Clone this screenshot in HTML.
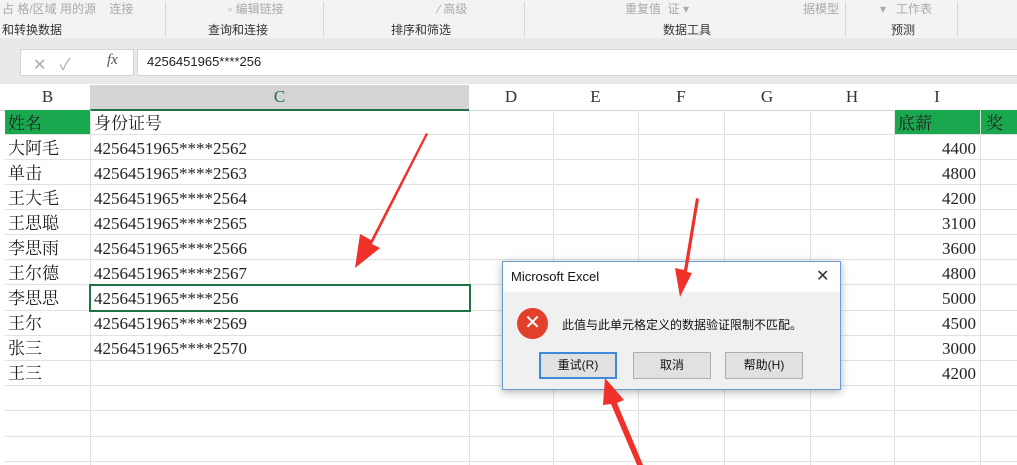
<!DOCTYPE html>
<html><head><meta charset="utf-8"><style>
body{margin:0;width:1017px;height:465px;overflow:hidden;background:#fff;position:relative;font-family:"Liberation Sans","Noto Sans CJK SC",sans-serif}
.a{position:absolute}
.rb{left:0;top:0;width:1017px;height:40px;background:#f3f3f3}
.gl{font-size:12px;color:#333;top:21px}
.gt{font-size:12px;color:#aaa;top:0px}
.sep{width:1px;background:#d6d6d6;top:2px;height:34px}
.cell{font-family:"Liberation Serif","Noto Serif CJK SC",serif;font-size:17px;color:#222}
.hl{background:#e1e1e1;height:1px;left:5px;width:1012px}
.vl{background:#e1e1e1;width:1px;top:110px;height:355px}
.ch{font-family:"Liberation Serif","Noto Serif CJK SC",serif;font-size:17px;color:#333;top:87px;text-align:center}
.btn{top:352px;width:76px;height:25px;background:#e1e1e1;border:1px solid #adadad;font-size:12px;text-align:center;line-height:25px;color:#111}
</style></head><body>
<div class="a rb"></div>
<div class="a gt" style="left:2px">占 格/区域 用的源&nbsp;&nbsp;&nbsp;&nbsp;连接</div>
<div class="a gt" style="left:228px">▫ 编辑链接</div>
<div class="a gt" style="left:438px">∕ 高级</div>
<div class="a gt" style="left:625px">重复值&nbsp;&nbsp;证 ▾</div>
<div class="a gt" style="left:803px">据模型</div>
<div class="a gt" style="left:880px">▾&nbsp;&nbsp;&nbsp;工作表</div>
<div class="a gl" style="left:2px">和转换数据</div>
<div class="a gl" style="left:208px">查询和连接</div>
<div class="a gl" style="left:391px">排序和筛选</div>
<div class="a gl" style="left:663px">数据工具</div>
<div class="a gl" style="left:891px">预测</div>
<div class="a sep" style="left:165px"></div><div class="a sep" style="left:323px"></div><div class="a sep" style="left:524px"></div><div class="a sep" style="left:845px"></div><div class="a sep" style="left:957px"></div>
<div class="a" style="left:0;top:38px;width:1017px;height:46px;background:#e9e9e9"></div>
<div class="a" style="left:20px;top:49px;width:112px;height:25px;background:#fff;border:1px solid #d4d4d4"></div>
<div class="a" style="left:33px;top:51px;font-size:16px;color:#aaa">✕&nbsp;&nbsp;&nbsp;✓</div>
<div class="a" style="left:107px;top:52px;font-family:'Liberation Serif',serif;font-style:italic;font-size:15px;color:#555">fx</div>
<div class="a" style="left:137px;top:49px;width:880px;height:25px;background:#fff;border:1px solid #d4d4d4"></div>
<div class="a" style="left:147px;top:54px;font-size:13px;color:#222">4256451965****256</div>
<div class="a" style="left:0;top:84px;width:1017px;height:26px;background:#fff;border-bottom:1px solid #d4d4d4"></div>
<div class="a" style="left:90px;top:85px;width:379px;height:24px;background:#d4d4d4;border-bottom:2px solid #217346"></div>
<div class="a ch" style="left:5px;width:85px">B</div>
<div class="a ch" style="left:90px;width:379px;color:#217346">C</div>
<div class="a ch" style="left:469px;width:84px">D</div>
<div class="a ch" style="left:553px;width:85px">E</div>
<div class="a ch" style="left:638px;width:86px">F</div>
<div class="a ch" style="left:724px;width:86px">G</div>
<div class="a ch" style="left:810px;width:84px">H</div>
<div class="a ch" style="left:894px;width:86px">I</div>
<div class="a" style="left:5px;top:110px;width:85px;height:25px;background:#1aa84f"></div>
<div class="a" style="left:894px;top:110px;width:123px;height:25px;background:#1aa84f"></div>
<div class="a hl" style="top:134px"></div><div class="a hl" style="top:159px"></div><div class="a hl" style="top:184px"></div><div class="a hl" style="top:209px"></div><div class="a hl" style="top:234px"></div><div class="a hl" style="top:259px"></div><div class="a hl" style="top:284px"></div><div class="a hl" style="top:310px"></div><div class="a hl" style="top:335px"></div><div class="a hl" style="top:360px"></div><div class="a hl" style="top:385px"></div><div class="a hl" style="top:410px"></div><div class="a hl" style="top:436px"></div><div class="a hl" style="top:461px"></div>
<div class="a vl" style="left:90px"></div><div class="a vl" style="left:469px"></div><div class="a vl" style="left:553px"></div><div class="a vl" style="left:638px"></div><div class="a vl" style="left:724px"></div><div class="a vl" style="left:810px"></div><div class="a vl" style="left:894px"></div><div class="a vl" style="left:980px"></div>
<div class="a cell" style="left:8px;top:111px;line-height:25px">
<div>姓名</div><div>大阿毛</div><div>单击</div><div>王大毛</div><div>王思聪</div><div>李思雨</div><div>王尔德</div><div>李思思</div><div>王尔</div><div>张三</div><div>王三</div></div>
<div class="a cell" style="left:94px;top:111px;line-height:25px">
<div>身份证号</div><div>4256451965****2562</div><div>4256451965****2563</div><div>4256451965****2564</div><div>4256451965****2565</div><div>4256451965****2566</div><div>4256451965****2567</div><div>4256451965****256</div><div>4256451965****2569</div><div>4256451965****2570</div></div>
<div class="a cell" style="left:894px;top:111px;width:82px;text-align:right;line-height:25px">
<div style="text-align:left;padding-left:4px">底薪</div><div>4400</div><div>4800</div><div>4200</div><div>3100</div><div>3600</div><div>4800</div><div>5000</div><div>4500</div><div>3000</div><div>4200</div></div>
<div class="a cell" style="left:986px;top:111px;line-height:25px">奖</div>
<div class="a" style="left:89px;top:284px;width:378px;height:24px;border:2px solid #217346"></div>
<div class="a" style="left:502px;top:261px;width:337px;height:127px;background:#f0f0f0;border:1px solid #6a9bd1;box-shadow:0 2px 8px rgba(0,0,0,.3)"></div>
<div class="a" style="left:503px;top:262px;width:337px;height:30px;background:#fff"></div>
<div class="a" style="left:511px;top:269px;font-size:13px;color:#111">Microsoft Excel</div>
<div class="a" style="left:816px;top:266px;font-size:16px;color:#333">✕</div>
<div class="a" style="left:517px;top:308px;width:31px;height:31px;border-radius:50%;background:#e2402a;color:#fff;font-size:20px;text-align:center;line-height:31px">✕</div>
<div class="a" style="left:562px;top:316px;font-size:12px;color:#111">此值与此单元格定义的数据验证限制不匹配。</div>
<div class="a btn" style="left:539px;border:1px solid #3c8ad8;box-shadow:inset 0 0 0 1px #3c8ad8">重试(R)</div>
<div class="a btn" style="left:633px">取消</div>
<div class="a btn" style="left:725px">帮助(H)</div>
<svg class="a" style="left:0;top:0" width="1017" height="465">
<g fill="#f0312a">
<polygon points="428,134 426,133 371,240 360,234 355,268 380,248 372,244"/>
<polygon points="699,199 696,198 684,270 675,268 680,297 692,273 687,272"/>
<polygon points="637,465 643,465 617,403 624,400 605,378 603,405 611,404"/>
</g></svg>
</body></html>
